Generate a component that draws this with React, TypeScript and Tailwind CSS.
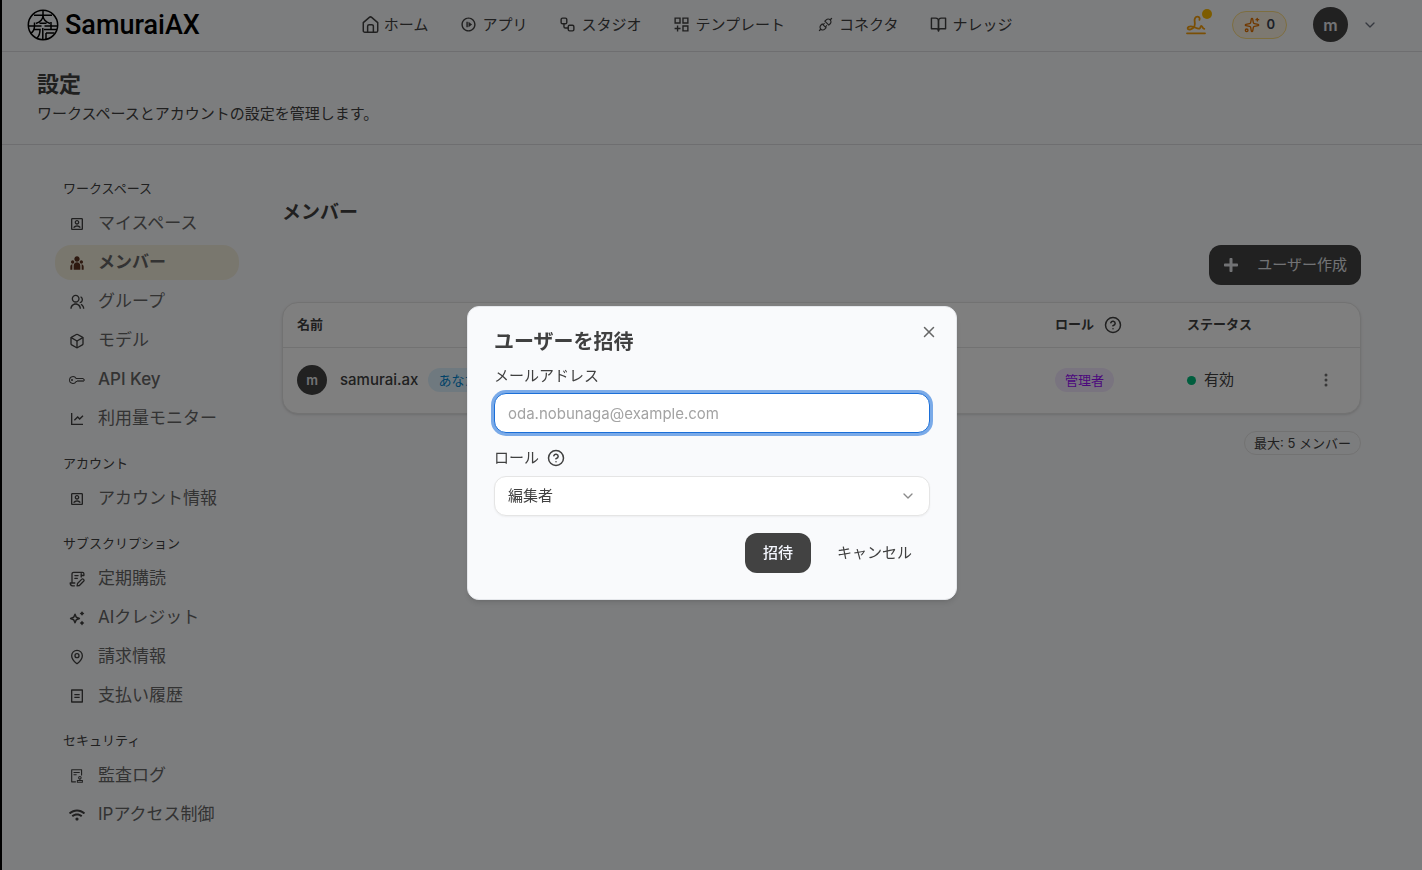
import { ReactNode, useState } from "react";
import clsx from "clsx";
import { IconType } from "react-icons";
import { AiOutlineApi, AiOutlineAudit } from "react-icons/ai";
import { BsKey, BsThreeDotsVertical } from "react-icons/bs";
import { FaPlus, FaWifi } from "react-icons/fa";
import { FiBookOpen, FiChevronDown, FiX } from "react-icons/fi";
import { MdOutlineNotStarted } from "react-icons/md";
import {
  RiAccountBoxLine,
  RiBillLine,
  RiGroupLine,
  RiLineChartLine,
  RiTeamFill,
} from "react-icons/ri";
import { Box, CircleHelp, MapPin, Sparkles, Workflow } from "lucide-react";

type IconProps = { className?: string };

function HomeIcon({ className }: IconProps) {
  return (
    <svg
      viewBox="0 0 16 16"
      fill="none"
      stroke="currentColor"
      strokeWidth="1.4"
      strokeLinejoin="round"
      className={className}
    >
      <path d="M1.2 6.2 6.9 1.3a1.7 1.7 0 0 1 2.2 0l5.700 4.900v7.600a1.500 1.500 0 0 1-1.500 1.500H2.700a1.500 1.500 0 0 1-1.500-1.500z" />
      <path d="M5.300 15.200V9.600a1.400 1.400 0 0 1 1.400-1.400h2.600a1.400 1.400 0 0 1 1.400 1.400v5.600" />
    </svg>
  );
}

function TemplateIcon({ className }: IconProps) {
  return (
    <svg
      viewBox="0 0 16 16"
      fill="none"
      stroke="currentColor"
      strokeWidth="1.3"
      className={className}
    >
      <path d="M2 2h4.600v4.600H2zM9.400 2H14v4.600H9.400zM9.400 9.400H14V14H9.400zM4.300 9v5.600M1.500 11.800h5.600" />
    </svg>
  );
}

function SignatureIcon({ className }: IconProps) {
  return (
    <svg
      viewBox="0 0 20 20"
      fill="none"
      stroke="currentColor"
      strokeWidth="1.8"
      strokeLinecap="round"
      strokeLinejoin="round"
      className={className}
    >
      <path d="M13.400 4.800c1.300-3-2.800-4.300-4.400-1.600C7.500 6 10 8 8.400 11.400 7 14.300 2 15.600 1.700 13.300c-.2-2 3.300-2.300 6.200-1.200 2.400.9 4.400 2.300 5.800 1.300 1-.8.6-2.500 1.600-2.500 1.200 0 .8 2.700 3 2.900" />
      <path d="M1 18.300h18" />
    </svg>
  );
}

function SubscriptionIcon({ className }: IconProps) {
  return (
    <svg
      viewBox="0 0 16 16"
      fill="none"
      stroke="currentColor"
      strokeWidth="1.3"
      strokeLinecap="round"
      strokeLinejoin="round"
      className={className}
    >
      <path d="M3 11.500V3a1.700 1.700 0 0 1 1.700-1.700h8.700a1.500 1.500 0 0 1 1.500 1.500v1.700h-2.700V2.600M12.200 4.500v1.500M5.900 4.600h3.200M5.900 7.400h2.400M5.800 12H1.200c0 2 1 2.800 2.400 2.800h1.800" />
      <path d="m8.500 12.500 4.100-4.100a1.300 1.300 0 0 1 2 1.900l-4.200 4.200-2.300.3z" />
    </svg>
  );
}

function CreditIcon({ className }: IconProps) {
  return (
    <svg viewBox="0 0 16 16" fill="currentColor" className={className}>
      <path
        d="M6 4.200 7.300 7.200 10.400 8.500 7.300 9.800 6 12.800 4.700 9.800 1.600 8.500 4.700 7.200z"
        fill="none"
        stroke="currentColor"
        strokeWidth="1.500"
        strokeLinejoin="round"
      />
      <path d="M13 1.200 14 2.500 15.300 3.500 14 4.500 13 5.800 12 4.500 10.700 3.500 12 2.500zM13 10.800 14 12.100 15.300 13.100 14 14.100 13 15.400 12 14.100 10.700 13.100 12 12.100z" />
    </svg>
  );
}

function LogoMark({ className }: IconProps) {
  return (
    <svg
      viewBox="0 0 32 32"
      fill="none"
      stroke="currentColor"
      strokeWidth="1.500"
      className={className}
    >
      <circle cx="16" cy="16" r="14.700" />
      <path d="M7 6.200h18M16 1.500v5c0 4-3 6.500-7 8M16 6.500c0 4 3 6.500 7 8M12.500 14.200h7M1.500 17h13M17.500 17h13M7.500 13.500V17c0 4-1.500 6-4 7.500M6.500 20.500H13c0 4-.7 6.500-3 8.500M24 13v7.500M17 20.500h13M19 24h8.500M19 24v6M15.800 19v11.500" />
    </svg>
  );
}

const navItems = [
  { label: "ホーム", icon: HomeIcon },
  { label: "アプリ", icon: MdOutlineNotStarted },
  { label: "スタジオ", icon: Workflow },
  { label: "テンプレート", icon: TemplateIcon },
  { label: "コネクタ", icon: AiOutlineApi },
  { label: "ナレッジ", icon: FiBookOpen },
];

type MenuItem = {
  label: string;
  icon: IconType | ((props: IconProps) => ReactNode) | typeof Box;
  active?: boolean;
  latin?: boolean;
};

const menu: { title: string; items: MenuItem[] }[] = [
  {
    title: "ワークスペース",
    items: [
      { label: "マイスペース", icon: RiAccountBoxLine },
      { label: "メンバー", icon: RiTeamFill, active: true },
      { label: "グループ", icon: RiGroupLine },
      { label: "モデル", icon: Box },
      { label: "API Key", icon: BsKey, latin: true },
      { label: "利用量モニター", icon: RiLineChartLine },
    ],
  },
  {
    title: "アカウント",
    items: [{ label: "アカウント情報", icon: RiAccountBoxLine }],
  },
  {
    title: "サブスクリプション",
    items: [
      { label: "定期購読", icon: SubscriptionIcon },
      { label: "AIクレジット", icon: CreditIcon },
      { label: "請求情報", icon: MapPin },
      { label: "支払い履歴", icon: RiBillLine },
    ],
  },
  {
    title: "セキュリティ",
    items: [
      { label: "監査ログ", icon: AiOutlineAudit },
      { label: "IPアクセス制御", icon: FaWifi },
    ],
  },
];

function Header() {
  return (
    <header className="flex items-center justify-between border-b border-[#dcdde0] pt-[7px] pb-[9px] pl-[25px] pr-11">
      <a href="#" className="flex items-center gap-1.5 text-black">
        <LogoMark className="size-8" />
        <span className="font-[family-name:Roboto,sans-serif] text-[27px] leading-8 font-medium">
          SamuraiAX
        </span>
      </a>
      <nav className="flex items-center gap-8">
        {navItems.map(({ label, icon: Icon }) => (
          <a
            key={label}
            href="#"
            className="flex items-center gap-[5px] text-[15px] leading-6"
          >
            <Icon className="size-[17px]" />
            {label}
          </a>
        ))}
      </nav>
      <div className="flex items-center gap-[26px] pl-3">
        <button type="button" aria-label="署名" className="relative">
          <SignatureIcon className="size-5 text-[#f59e0b]" />
          <span className="absolute -top-1.5 -right-1.5 size-2.5 rounded-full bg-[#fbb800]" />
        </button>
        <div className="flex h-7 items-center gap-1.5 rounded-full border border-[#fbdc80] bg-[#fbf3e2] px-[11px] text-[13px] font-semibold text-[#374151]">
          <Sparkles className="size-4 text-[#e17100]" />0
        </div>
        <button
          type="button"
          aria-label="アカウントメニュー"
          className="flex items-center gap-3.5"
        >
          <span className="flex size-[35px] items-center justify-center rounded-full bg-[#424242] text-base font-semibold text-[#e5e7eb]">
            m
          </span>
          <FiChevronDown className="size-4 text-[#6b7280]" />
        </button>
      </div>
    </header>
  );
}

function Sidebar() {
  return (
    <aside className="flex w-46 shrink-0 flex-col gap-[13px]">
      {menu.map((group) => (
        <section key={group.title} className="flex flex-col gap-1">
          <h3 className="px-2 text-[13px] leading-7">{group.title}</h3>
          {group.items.map(({ label, icon: Icon, active, latin }) => (
            <a
              key={label}
              href="#"
              className={clsx(
                "flex h-[35px] items-center gap-[13px] px-3.5 text-[17px] text-[#666]",
                active && "rounded-2xl bg-[#f3eedd] font-bold",
                latin && "font-medium"
              )}
            >
              <Icon
                className={clsx(
                  "size-4",
                  active ? "text-[#5c3320]" : "text-[#404040]"
                )}
              />
              {label}
            </a>
          ))}
        </section>
      ))}
    </aside>
  );
}

function Members({ onCreate }: { onCreate: () => void }) {
  return (
    <main className="flex min-w-0 flex-1 flex-col pt-[25px]">
      <h2 className="text-[19px] leading-7 font-bold">メンバー</h2>
      <button
        type="button"
        onClick={onCreate}
        className="mt-[18px] flex h-10 items-center gap-[18px] self-end rounded-xl bg-[#424242] px-3.5 text-[15px] text-[#e5e7eb]"
      >
        <FaPlus className="size-4" />
        ユーザー作成
      </button>
      <div className="mt-[17px] overflow-hidden rounded-2xl border border-[#e5e5e5] bg-white shadow-sm">
        <table className="w-full text-left">
          <thead className="text-[13px]">
            <tr className="h-11 border-b border-[#e5e5e5]">
              <th className="px-3.5">名前</th>
              <th className="w-[132px] px-3.5">
                <span className="flex items-center gap-2.5">
                  ロール
                  <CircleHelp className="size-[18px]" />
                </span>
              </th>
              <th className="w-[127px] px-3.5">ステータス</th>
              <th className="w-[60px]" aria-label="操作" />
            </tr>
          </thead>
          <tbody className="text-[15px]">
            <tr className="h-[66px]">
              <td className="px-3.5">
                <div className="flex items-center">
                  <span className="flex size-[30px] items-center justify-center rounded-full bg-[#424242] text-[13px] font-semibold text-[#e5e7eb]">
                    m
                  </span>
                  <span className="ml-[13px] font-medium">samurai.ax</span>
                  <span className="ml-2.5 rounded-full bg-[#dff2fe] px-2.5 text-[13px] leading-6 text-[#0084d1]">
                    あなた
                  </span>
                </div>
              </td>
              <td className="px-3.5">
                <span className="inline-block rounded-full bg-[#f3e8ff] px-2.5 text-[13px] leading-6 text-[#9810fa]">
                  管理者
                </span>
              </td>
              <td className="px-3.5">
                <span className="flex items-center gap-2">
                  <span className="size-[9px] rounded-full bg-[#00bc7d]" />
                  有効
                </span>
              </td>
              <td className="pl-2.5">
                <button
                  type="button"
                  aria-label="メニュー"
                  className="flex size-8 items-center justify-center text-[#737373]"
                >
                  <BsThreeDotsVertical className="size-4" />
                </button>
              </td>
            </tr>
          </tbody>
        </table>
      </div>
      <p className="mt-[17px] self-end rounded-full border border-[#e5e5e5] px-[9px] text-[13px] leading-[22px]">
        最大: 5 メンバー
      </p>
    </main>
  );
}

function InviteDialog({ onClose }: { onClose: () => void }) {
  const [email, setEmail] = useState("");
  const [role, setRole] = useState("editor");

  return (
    <div className="fixed inset-0 flex items-center justify-center bg-black/50 pt-9 pl-0.5">
      <form
        role="dialog"
        aria-labelledby="invite-title"
        onSubmit={(e) => e.preventDefault()}
        className="flex w-[490px] flex-col rounded-xl border border-[#e5e7eb] bg-[#f9fafc] px-[26px] pt-[21px] pb-[26px] shadow-md"
      >
        <div className="flex items-start justify-between">
          <h2 id="invite-title" className="text-[20px] leading-7 font-bold">
            ユーザーを招待
          </h2>
          <button
            type="button"
            aria-label="閉じる"
            onClick={onClose}
            className="-mr-2 flex h-2 items-center text-[#666]"
          >
            <FiX className="size-[18px]" />
          </button>
        </div>
        <label htmlFor="email" className="mt-2 text-[15px] leading-6">
          メールアドレス
        </label>
        <input
          id="email"
          type="email"
          value={email}
          placeholder="oda.nobunaga@example.com"
          onChange={(e) => setEmail(e.target.value)}
          className="mt-[5px] h-10 w-full rounded-xl border border-[#1b6fd8] bg-white px-[13px] text-[15px] ring-3 ring-[#7aaae8] outline-none placeholder:text-[#a3a3a3]"
        />
        <div className="mt-[13px] flex items-center gap-2">
          <label htmlFor="role" className="text-[15px] leading-6">
            ロール
          </label>
          <CircleHelp className="size-[18px]" />
        </div>
        <div className="relative mt-1.5">
          <select
            id="role"
            value={role}
            onChange={(e) => setRole(e.target.value)}
            className="h-10 w-full appearance-none rounded-xl border border-[#e5e5e5] bg-white px-[13px] text-[15px] shadow-xs"
          >
            <option value="editor">編集者</option>
            <option value="admin">管理者</option>
          </select>
          <FiChevronDown className="pointer-events-none absolute top-3 right-3.5 size-4 text-[#8a8a8a]" />
        </div>
        <div className="mt-[17px] flex justify-end">
          <button
            type="submit"
            className="h-10 rounded-xl bg-[#424242] px-[18px] text-[15px] font-medium text-[#f5f7ff]"
          >
            招待
          </button>
          <button
            type="button"
            onClick={onClose}
            className="ml-2 h-10 px-[18px] text-[15px]"
          >
            キャンセル
          </button>
        </div>
      </form>
    </div>
  );
}

export default function App() {
  const [isInviting, setIsInviting] = useState(true);

  return (
    <div className="min-h-screen border-l-2 border-black bg-[#f9fafc] font-[Inter,'Noto_Sans_CJK_JP',sans-serif] text-[#404040]">
      <Header />
      <div className="border-b border-[#dcdde0] px-[35px] pt-4 pb-[18px]">
        <h1 className="text-[22px] leading-8 font-bold">設定</h1>
        <p className="mt-0.5 text-[15px] leading-6">
          ワークスペースとアカウントの設定を管理します。
        </p>
      </div>
      <div className="flex gap-[43px] pt-[29px] pr-[61px] pl-[53px]">
        <Sidebar />
        <Members onCreate={() => setIsInviting(true)} />
      </div>
      {isInviting && <InviteDialog onClose={() => setIsInviting(false)} />}
    </div>
  );
}
